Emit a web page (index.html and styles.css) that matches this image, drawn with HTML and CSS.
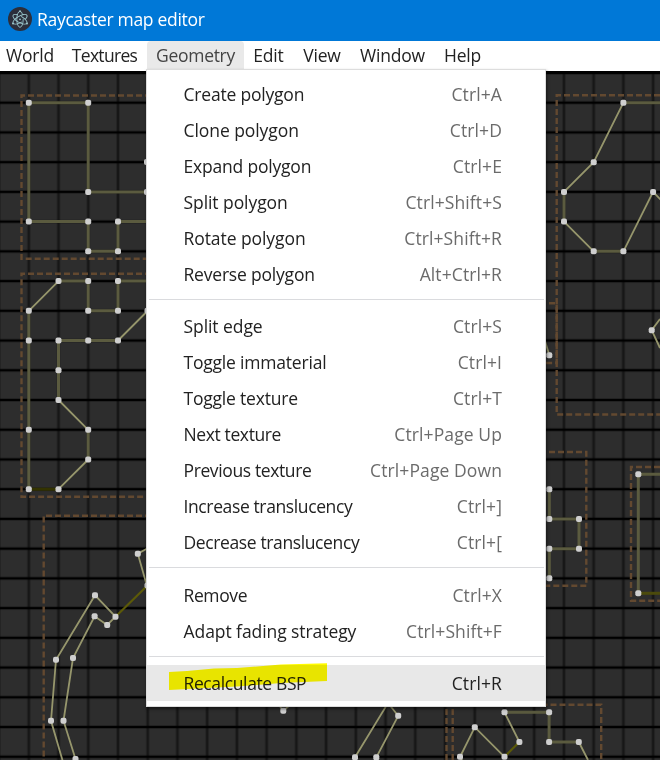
FILE: index.html
```html
<!DOCTYPE html>
<html lang="en">
<head>
<meta charset="utf-8">
<title>Raycaster map editor</title>
<link rel="stylesheet" href="styles.css">
</head>
<body>
<header class="titlebar">
  <svg class="logo" width="24" height="24" viewBox="0 0 24 24">
    <circle cx="12" cy="12" r="12" fill="#2b2e3b"/>
    <g fill="none" stroke="#9bc6cc" stroke-width=".9">
      <ellipse cx="12" cy="12.3" rx="3.2" ry="8" stroke-dasharray="32 4"/>
      <ellipse cx="12" cy="12.3" rx="3.2" ry="8" transform="rotate(60 12 12.3)" stroke-dasharray="32 4"/>
      <ellipse cx="12" cy="12.3" rx="3.2" ry="8" transform="rotate(-60 12 12.3)" stroke-dasharray="32 4"/>
    </g>
    <g fill="#9bc6cc"><circle cx="12" cy="12.3" r=".9"/><circle cx="12" cy="4.3" r="1"/><circle cx="5" cy="16.5" r="1"/><circle cx="19" cy="16.5" r="1"/></g>
  </svg>
  <span class="title">Raycaster map editor</span>
</header>
<nav class="menubar">
  <span class="tab world">World</span>
  <span class="tab textures">Textures</span>
  <span class="tab geometry">Geometry</span>
  <span class="tab edit">Edit</span>
  <span class="tab view">View</span>
  <span class="tab window">Window</span>
  <span class="tab help">Help</span>
</nav>
<main class="workspace">
  <svg class="map" width="660" height="689" viewBox="0 71 660 689">
    <defs>
      <pattern id="cols" x="13.93" y="0" width="29.73" height="760" patternUnits="userSpaceOnUse">
        <path d="M14.87 0V760" stroke="#171717" stroke-width="2.8"/>
      </pattern>
      <pattern id="rows" x="0" y="87.83" width="660" height="29.73" patternUnits="userSpaceOnUse">
        <path d="M0 14.87H660" stroke="#000" stroke-width="2.7"/>
      </pattern>
      <marker id="dot" markerUnits="userSpaceOnUse" markerWidth="8" markerHeight="8" refX="4" refY="4">
        <rect x="1" y="1" width="6" height="6" rx="2" fill="#cfcfcf"/>
      </marker>
    </defs>
    <rect y="71" width="660" height="689" fill="#2d2d2d"/>
    <rect y="71" width="660" height="689" fill="url(#cols)"/>
    <rect y="71" width="660" height="689" fill="url(#rows)"/>
    <path d="M0 71.5H660" stroke="#000"/>
    <g class="bounds">
      <path d="M160 95.5H21.5V258.8H160"/>
      <path d="M160 273.8H21.5V496.7H160"/>
      <path d="M160 515.7H43.7V760"/>
      <path d="M660 95.3H556.7V414.5H660"/>
      <path d="M540 303.3H556.7V363H540"/>
      <path d="M540 452H586.3V585.7H540"/>
      <path d="M660 467H631V600.8H660"/>
      <path d="M446.5 760V700M452.7 760V704.8H601.2V760"/>
    </g>
    <g class="walls">
      <path d="M28.8 102.7H88.2M28.8 102.7V221.6M88.2 102.7V191.9H147M28.8 221.6H88.2V251.3H118V221.6H150"/>
      <path d="M58.5 281.1H88.2V310.8H118V281.1H150M28.8 310.8V489.2M118 340.5H58.5V400M88.2 429.8V459.5"/>
      <path d="M623.4 102.7H660M564 191.9V221.6M593.7 251.3H623.4"/>
      <path d="M549.3 489.2V519H579V548.7H549.3V578.3M660 474.3H638.3V593.3"/>
      <path d="M504.5 712.3H549.1V742H578.8"/>
    </g>
    <g class="edges">
      <path d="M58.5 281.1L28.8 310.8M58.5 400L88.2 429.8M88.2 459.5L58.5 489.2M118 340.5L150 308.5"/>
      <path d="M150 547L137.8 553.8L147 586M115.5 616.7L95 595.3L56 659.8L51 720.8L63 762M115.5 616.7L107.2 625L94.6 616.3L73 658L63.5 720.8L75.5 759L77 764"/>
      <path d="M623.4 102.7L593.7 162.2L564 191.9M564 221.6L593.7 251.3M623.4 251.3L653.1 191.9L662 201M660 319L651.7 330.2L660 348M549.3 355.3L545 341"/>
      <path d="M278 704L283.3 710.7L290 705M355 757.3L388 703L398.2 715.8L376.3 757.3M460 757L474.8 727.2L504.5 756.8M504.5 712.3L519.4 742M578.8 742L588 760M460 757L463 762"/>
    </g>
    <g class="portals">
      <path class="dark" d="M28.8 489.2H58.5"/>
      <path d="M115.5 616.7L148 585M519.4 742L504.5 756.8"/>
      <path class="wide" d="M638.3 593.3H660"/>
    </g>
    <g class="dots">
      <path d="M28.8 102.7L88.2 102.7L88.2 191.9L147 191.9L147 162L28.8 221.6L88.2 221.6L88.2 251.3L118 251.3L118 221.6"/>
      <path d="M58.5 281.1L88.2 281.1L118 281.1L88.2 310.8L118 310.8L147.5 310.8L28.8 310.8L28.8 340.5L58.5 340.5L88.2 340.5L118 340.5L58.5 370.3L58.5 400L28.8 429.8L88.2 429.8L88.2 459.5L28.8 489.2L58.5 489.2"/>
      <path d="M137.8 553.8L147.5 585.5L95 595.3L94.6 616.3L107.2 625L115.5 616.7L56 659.8L73 658L51 720.8L63.5 720.8L75.5 759"/>
      <path d="M623.4 102.7L593.7 162.2L564 191.9L653.1 191.9L564 221.6L593.7 251.3L623.4 251.3L651.7 330.2L549.3 355.3"/>
      <path d="M549.3 489.2L549.3 519L579 519L579 548.7L549.3 548.7L549.3 578.3L638.3 474.3L638.3 593.3"/>
      <path d="M283.3 710.7L398.2 715.8L355 757.3L376.3 757.3L474.8 727.2L504.5 712.3L549.1 712.3L519.4 742L549.1 742L578.8 742L504.5 756.8L460 756.8"/>
    </g>
  </svg>
</main>
<section class="menu">
  <div class="item"><span>Create polygon</span><kbd>Ctrl+A</kbd></div>
  <div class="item"><span class="loose">Clone polygon</span><kbd>Ctrl+D</kbd></div>
  <div class="item"><span>Expand polygon</span><kbd>Ctrl+E</kbd></div>
  <div class="item"><span class="loose">Split polygon</span><kbd>Ctrl+Shift+S</kbd></div>
  <div class="item"><span class="loose">Rotate polygon</span><kbd>Ctrl+Shift+R</kbd></div>
  <div class="item"><span>Reverse polygon</span><kbd>Alt+Ctrl+R</kbd></div>
  <hr class="rule">
  <div class="item"><span class="loose">Split edge</span><kbd>Ctrl+S</kbd></div>
  <div class="item"><span>Toggle immaterial</span><kbd>Ctrl+I</kbd></div>
  <div class="item"><span>Toggle texture</span><kbd>Ctrl+T</kbd></div>
  <div class="item"><span class="tight">Next texture</span><kbd>Ctrl+Page Up</kbd></div>
  <div class="item"><span class="tight">Previous texture</span><kbd>Ctrl+Page Down</kbd></div>
  <div class="item"><span class="tight">Increase translucency</span><kbd>Ctrl+]</kbd></div>
  <div class="item"><span class="tight">Decrease translucency</span><kbd>Ctrl+[</kbd></div>
  <hr class="rule tall">
  <div class="item"><span class="tight">Remove</span><kbd>Ctrl+X</kbd></div>
  <div class="item"><span class="loose">Adapt fading strategy</span><kbd>Ctrl+Shift+F</kbd></div>
  <hr class="rule short">
  <div class="item active"><span class="tight">Recalculate BSP</span><kbd>Ctrl+R</kbd></div>
  <svg class="marker" width="158" height="27" viewBox="0 0 158 27"><path d="M0 9L18 8L45 5.5L68 5L112 1.5L158 .2V18L112 20L68 23.5L38 25L0 27Z" fill="#fffb00"/></svg>
</section>
</body>
</html>
```
FILE: styles.css
```css
* { box-sizing: border-box; }
body {
  margin: 0;
  width: 660px;
  height: 760px;
  overflow: hidden;
  position: relative;
  background: #fff;
  color: #222;
  font-family: "Open Sans", "Noto Sans", sans-serif;
  font-size: 17.5px;
  letter-spacing: -0.2px;
}
.titlebar {
  height: 41px;
  padding: 0 0 3px 8px;
  display: flex;
  align-items: center;
  gap: 5px;
  background: #0078d7;
  color: #fff;
}
.title { white-space: nowrap; letter-spacing: -0.3px; }
.menubar { height: 30px; display: flex; }
.tab {
  height: 29px;
  line-height: 29px;
  text-align: center;
  white-space: nowrap;
  border-radius: 4px 4px 0 0;
}
.world { width: 60px; }
.textures { width: 87px; padding-left: 2px; letter-spacing: -0.7px; }
.geometry { width: 97px; background: #e9e9e9; color: #444; letter-spacing: -0.3px; }
.edit { width: 49px; }
.view { width: 58px; }
.window { width: 83px; }
.help { width: 57px; }
.map { display: block; }
.bounds path { fill: none; stroke: #634930; stroke-width: 2.4; stroke-dasharray: 6 3; }
.walls path { fill: none; stroke: #5b5b3f; stroke-width: 3; }
.edges path { fill: none; stroke: #96966c; stroke-width: 1.8; }
.portals path { fill: none; stroke: #5c5a08; stroke-width: 2.2; }
.portals .dark { stroke: #333300; stroke-width: 3; }
.portals .wide { stroke: #4b4a0c; stroke-width: 3; }
.dots path { fill: none; marker: url(#dot); }
.menu {
  position: absolute;
  left: 146px;
  top: 69px;
  width: 400px;
  height: 638px;
  padding-top: 7px;
  background: #fff;
  border: 1px solid #ddd;
  box-shadow: 1px 2px 3px rgba(0, 0, 0, .5);
}
.item {
  height: 36px;
  padding: 0 43px 2px 36.5px;
  display: flex;
  align-items: center;
  justify-content: space-between;
  white-space: nowrap;
}
.item kbd { font: inherit; color: #6b6b6b; letter-spacing: 0.1px; }
.loose { letter-spacing: -0.07px; }
.tight { letter-spacing: -0.38px; }
.active { background: #e8e8e8; padding-bottom: 0; }
.active kbd { color: #222; }
.rule { height: 1px; margin: 6px 1px 9px 2px; border: 0; background: #dadbde; }
.tall { margin-bottom: 10px; }
.short { margin-bottom: 8px; }
.marker {
  position: absolute;
  left: 22px;
  top: 593px;
  mix-blend-mode: multiply;
}
```
